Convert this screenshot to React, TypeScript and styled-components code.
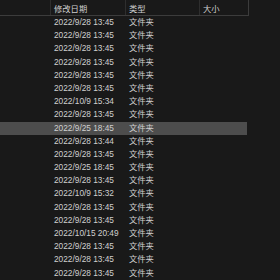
import styled, { createGlobalStyle } from 'styled-components';

const GlobalStyle = createGlobalStyle`
  html, body {
    margin: 0;
    padding: 0;
    background: #191919;
  }
  body {
    width: 280px;
    height: 280px;
    overflow: hidden;
    font-family: "Liberation Sans", "Noto Sans CJK SC", sans-serif;
  }
`;

const rows = [
  '2022/9/28 13:45',
  '2022/9/28 13:45',
  '2022/9/28 13:45',
  '2022/9/28 13:45',
  '2022/9/28 13:45',
  '2022/9/28 13:45',
  '2022/10/9 15:34',
  '2022/9/28 13:45',
  '2022/9/25 18:45',
  '2022/9/28 13:44',
  '2022/9/28 13:45',
  '2022/9/25 18:45',
  '2022/9/28 13:45',
  '2022/10/9 15:32',
  '2022/9/28 13:45',
  '2022/9/28 13:45',
  '2022/10/15 20:49',
  '2022/9/28 13:45',
  '2022/9/28 13:45',
  '2022/9/28 13:45',
];

const COLS = '51px 75px 74px 49px';

const Pane = styled.div`
  width: 280px;
  height: 280px;
  background: #191919;
  color: #d0d0d0;
  font-size: 8.3px;
`;

const Header = styled.div`
  display: grid;
  grid-template-columns: ${COLS};
  height: 16px;
  width: 249px;
  border-bottom: 1px solid #3c3c3c;
  box-sizing: border-box;
`;

const HeadCell = styled.div<{ $last?: boolean }>`
  display: flex;
  align-items: center;
  padding-left: 3px;
  border-right: 1px solid ${(p) => (p.$last ? '#3c3c3c' : '#2e2e2e')};
  color: #cfcfcf;
`;

const Body = styled.div`
  display: flex;
  flex-direction: column;
`;

const Row = styled.div<{ $active?: boolean }>`
  display: grid;
  grid-template-columns: ${COLS};
  width: 247px;
  height: 13.2px;
  align-items: center;
  background: ${(p) => (p.$active ? '#4d4d4d' : 'transparent')};
`;

const Cell = styled.div`
  padding-left: 3px;
  white-space: nowrap;
  line-height: 13.2px;
`;

export default function App() {
  return (
    <>
      <GlobalStyle />
      <Pane>
        <Header>
          <HeadCell />
          <HeadCell>修改日期</HeadCell>
          <HeadCell>类型</HeadCell>
          <HeadCell $last>大小</HeadCell>
        </Header>
        <Body>
          {rows.map((d, i) => (
            <Row key={i} $active={i === 8}>
              <Cell />
              <Cell>{d}</Cell>
              <Cell>文件夹</Cell>
              <Cell />
            </Row>
          ))}
        </Body>
      </Pane>
    </>
  );
}
